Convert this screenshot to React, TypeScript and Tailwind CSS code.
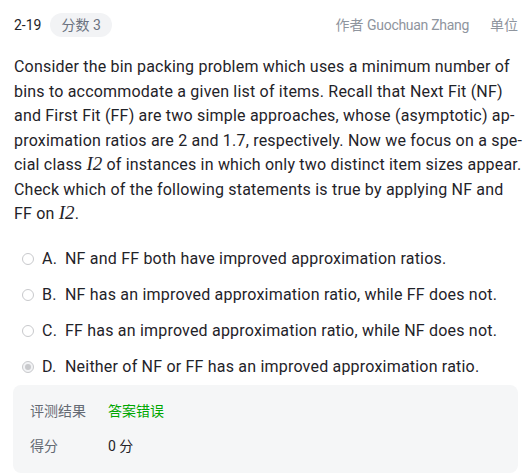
import React from "react";

const opts = [
  { key: "A", text: "NF and FF both have improved approximation ratios." },
  { key: "B", text: "NF has an improved approximation ratio, while FF does not." },
  { key: "C", text: "FF has an improved approximation ratio, while NF does not." },
  { key: "D", text: "Neither of NF or FF has an improved approximation ratio." },
];

function I2() {
  return (
    <span className="italic text-[19px] leading-none tracking-normal" style={{ fontFamily: "'Liberation Serif', serif" }}>
      I2
    </span>
  );
}

export default function App() {
  return (
    <div
      className="w-[531px] h-[475px] bg-white overflow-hidden text-[#1f2329]"
      style={{ fontFamily: "Roboto, 'Noto Sans CJK SC', sans-serif" }}
    >
      <div className="flex items-center h-[50px] pl-[14px] pr-[13px] text-sm whitespace-nowrap">
        <span className="text-[#1f2329]">2-19</span>
        <span className="ml-[9px] h-6 px-[11px] flex items-center rounded-full bg-[#f2f3f5] text-[#6b7280]">
          分数 3
        </span>
        <span className="ml-auto text-[#8f959e]">
          作者 <span className="tracking-[-0.3px]">Guochuan Zhang</span>
        </span>
        <span className="ml-[21px] text-[#8f959e]">单位</span>
      </div>

      <p className="px-[14px] text-base tracking-[0.2px] leading-[24.5px] mt-[5px] whitespace-nowrap">
        Consider the bin packing problem which uses a minimum number of
        <br />
        bins to accommodate a given list of items. Recall that Next Fit (NF)
        <br />
        and First Fit (FF) are two simple approaches, whose (asymptotic) ap-
        <br />
        proximation ratios are 2 and 1.7, respectively. Now we focus on a spe-
        <br />
        cial class <I2 /> of instances in which only two distinct item sizes appear.
        <br />
        Check which of the following statements is true by applying NF and
        <br />
        FF on <I2 />.
      </p>

      <div className="mt-[14px] flex flex-col">
        {opts.map((o) => (
          <label key={o.key} className="flex items-center h-9 pl-[22px] text-base tracking-[0.2px] whitespace-nowrap">
            <span
              className={
                "w-[12px] h-[12px] rounded-full border flex items-center justify-center " +
                (o.key === "D" ? "border-[#c8c9cc] bg-[#f2f3f5]" : "border-[#c8c9cc] bg-white")
              }
            >
              {o.key === "D" && <span className="w-[6px] h-[6px] rounded-full bg-[#c8c9cc]" />}
            </span>
            <span className="ml-[8px] w-[23px]">{o.key}.</span>
            <span>{o.text}</span>
          </label>
        ))}
      </div>

      <div className="mx-[13px] rounded-lg bg-[#f5f6f7] px-[17px] py-[9px] text-sm">
        <div className="flex items-center h-[35px]">
          <span className="w-[78px] text-[#646a73]">评测结果</span>
          <span className="text-[#00a700]">答案错误</span>
        </div>
        <div className="flex items-center h-[35px]">
          <span className="w-[78px] text-[#646a73]">得分</span>
          <span>0 分</span>
        </div>
      </div>
    </div>
  );
}
